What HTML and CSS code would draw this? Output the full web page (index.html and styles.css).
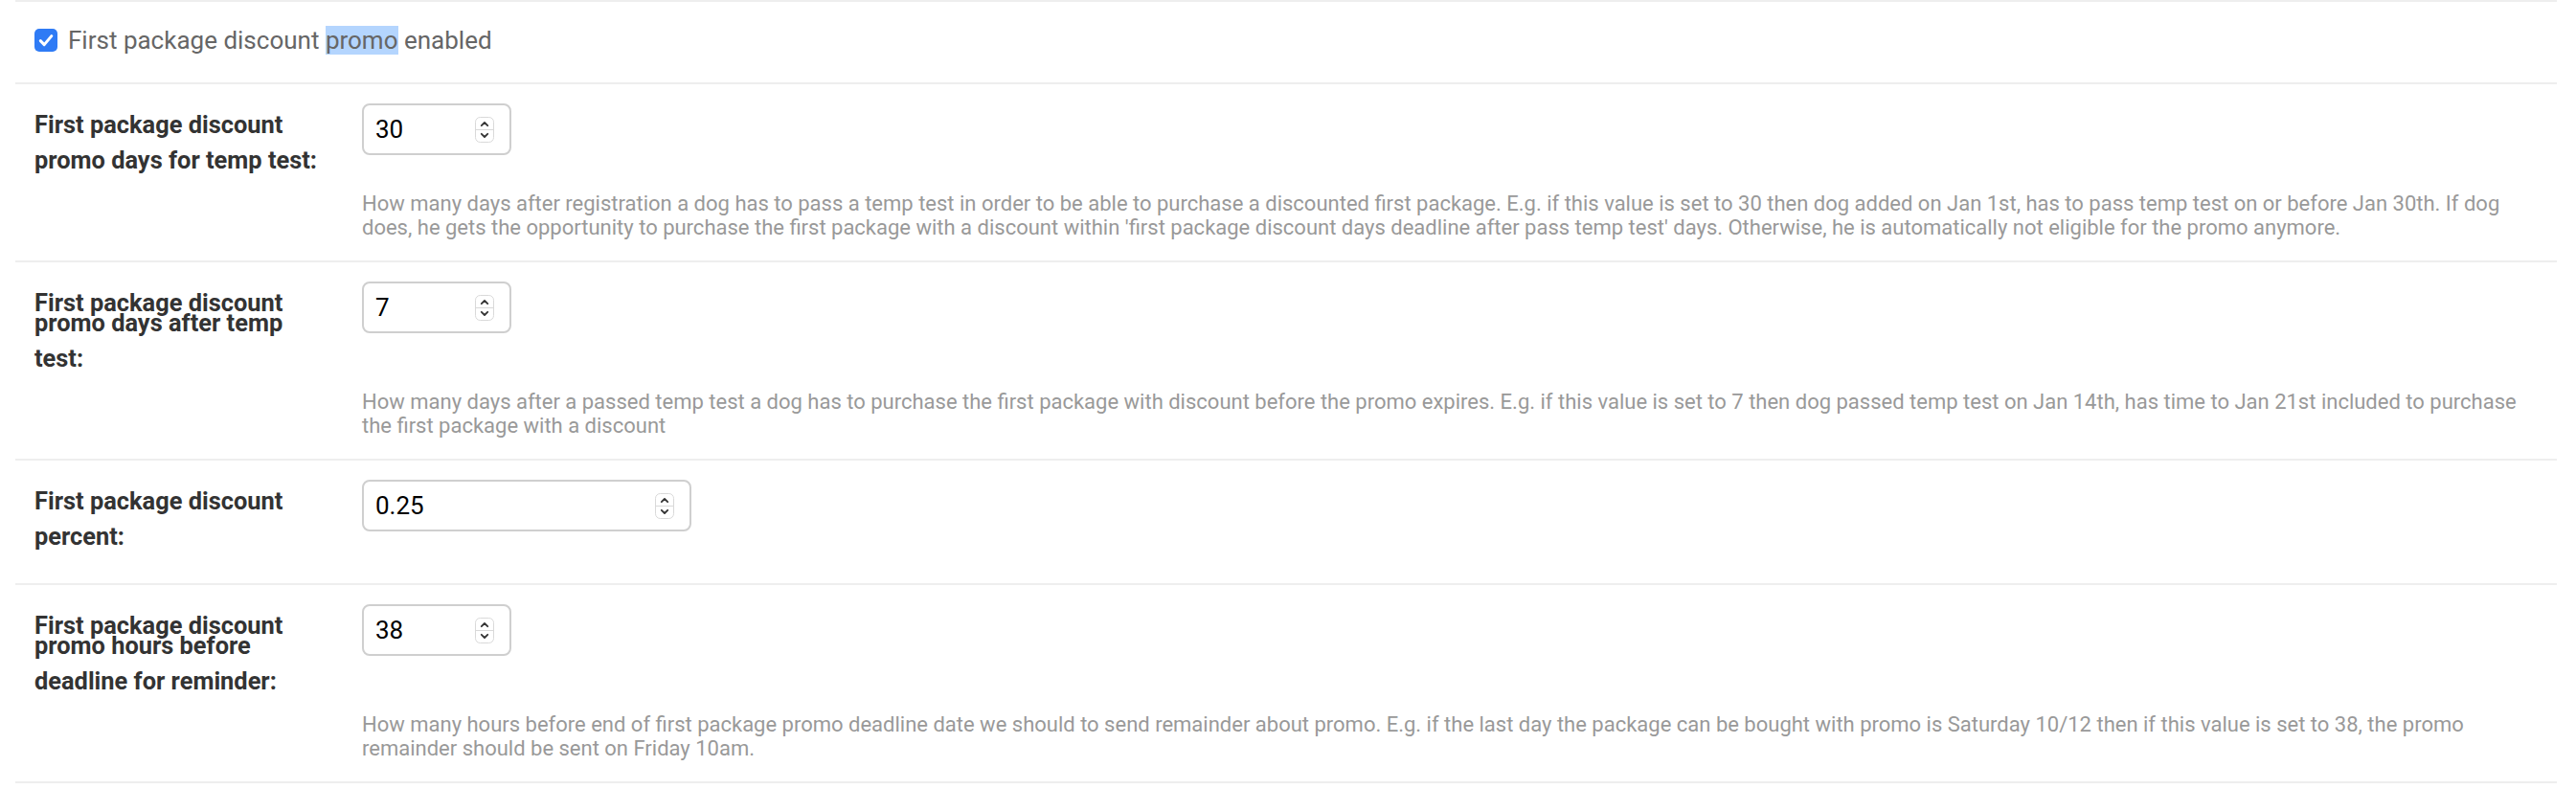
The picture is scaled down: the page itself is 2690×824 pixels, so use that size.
FILE: index.html
```html
<!DOCTYPE html>
<html lang="en">
<head>
    <meta charset="UTF-8">
    <meta name="viewport" content="width=device-width, initial-scale=1.0">
    <title>Change settings</title>
    <link rel="stylesheet" href="styles.css">
</head>
<body>
    <fieldset class="module aligned">
        <div class="form-row checkbox-row">
            <span class="checkbox">
                <svg width="24" height="24" viewBox="0 0 24 24">
                    <rect x="0" y="0" width="24" height="24" rx="5" fill="#2f7bf5"/>
                    <path d="M6.3 12.6 L10.2 16.6 L17.8 7.6" fill="none" stroke="#fff" stroke-width="3" stroke-linecap="round" stroke-linejoin="round"/>
                </svg>
            </span>
            <label class="checkbox-label">First package discount <span class="selected">promo</span> enabled</label>
        </div>

        <div class="form-row">
            <div class="field-box">
                <label class="required">First package discount promo days for temp test<span class="suffix">:</span></label>
                <div class="num-input">
                    <input type="text" value="30">
                    <span class="spin">
                        <svg width="20" height="27" viewBox="0 0 20 27">
                            <rect x="0.5" y="0.5" width="19" height="26" rx="5" fill="#fff" stroke="#d9d9d9"/>
                            <line x1="1" y1="13.5" x2="19" y2="13.5" stroke="#d9d9d9"/>
                            <path d="M6.8 9.2 L10 6 L13.2 9.2" fill="none" stroke="#333" stroke-width="1.8" stroke-linecap="round" stroke-linejoin="round"/>
                            <path d="M6.8 17.8 L10 21 L13.2 17.8" fill="none" stroke="#333" stroke-width="1.8" stroke-linecap="round" stroke-linejoin="round"/>
                        </svg>
                    </span>
                </div>
            </div>
            <div class="help">How many days after registration a dog has to pass a temp test in order to be able to purchase a discounted first package. E.g. if this value is set to 30 then dog added on Jan 1st, has to pass temp test on or before Jan 30th. If dog does, he gets the opportunity to purchase the first package with a discount within 'first package discount days deadline after pass temp test' days. Otherwise, he is automatically not eligible for the promo anymore.</div>
        </div>

        <div class="form-row">
            <div class="field-box">
                <label class="required">First package discount promo days after temp test<span class="suffix">:</span></label>
                <div class="num-input">
                    <input type="text" value="7">
                    <span class="spin">
                        <svg width="20" height="27" viewBox="0 0 20 27">
                            <rect x="0.5" y="0.5" width="19" height="26" rx="5" fill="#fff" stroke="#d9d9d9"/>
                            <line x1="1" y1="13.5" x2="19" y2="13.5" stroke="#d9d9d9"/>
                            <path d="M6.8 9.2 L10 6 L13.2 9.2" fill="none" stroke="#333" stroke-width="1.8" stroke-linecap="round" stroke-linejoin="round"/>
                            <path d="M6.8 17.8 L10 21 L13.2 17.8" fill="none" stroke="#333" stroke-width="1.8" stroke-linecap="round" stroke-linejoin="round"/>
                        </svg>
                    </span>
                </div>
            </div>
            <div class="help">How many days after a passed temp test a dog has to purchase the first package with discount before the promo expires. E.g. if this value is set to 7 then dog passed temp test on Jan 14th, has time to Jan 21st included to purchase the first package with a discount</div>
        </div>

        <div class="form-row">
            <div class="field-box">
                <label class="required">First package discount percent<span class="suffix">:</span></label>
                <div class="num-input wide">
                    <input type="text" value="0.25">
                    <span class="spin">
                        <svg width="20" height="27" viewBox="0 0 20 27">
                            <rect x="0.5" y="0.5" width="19" height="26" rx="5" fill="#fff" stroke="#d9d9d9"/>
                            <line x1="1" y1="13.5" x2="19" y2="13.5" stroke="#d9d9d9"/>
                            <path d="M6.8 9.2 L10 6 L13.2 9.2" fill="none" stroke="#333" stroke-width="1.8" stroke-linecap="round" stroke-linejoin="round"/>
                            <path d="M6.8 17.8 L10 21 L13.2 17.8" fill="none" stroke="#333" stroke-width="1.8" stroke-linecap="round" stroke-linejoin="round"/>
                        </svg>
                    </span>
                </div>
            </div>
        </div>

        <div class="form-row">
            <div class="field-box">
                <label class="required">First package discount promo hours before deadline for reminder<span class="suffix">:</span></label>
                <div class="num-input">
                    <input type="text" value="38">
                    <span class="spin">
                        <svg width="20" height="27" viewBox="0 0 20 27">
                            <rect x="0.5" y="0.5" width="19" height="26" rx="5" fill="#fff" stroke="#d9d9d9"/>
                            <line x1="1" y1="13.5" x2="19" y2="13.5" stroke="#d9d9d9"/>
                            <path d="M6.8 9.2 L10 6 L13.2 9.2" fill="none" stroke="#333" stroke-width="1.8" stroke-linecap="round" stroke-linejoin="round"/>
                            <path d="M6.8 17.8 L10 21 L13.2 17.8" fill="none" stroke="#333" stroke-width="1.8" stroke-linecap="round" stroke-linejoin="round"/>
                        </svg>
                    </span>
                </div>
            </div>
            <div class="help">How many hours before end of first package promo deadline date we should to send remainder about promo. E.g. if the last day the package can be bought with promo is Saturday 10/12 then if this value is set to 38, the promo remainder should be sent on Friday 10am.</div>
        </div>
    </fieldset>
</body>
</html>
```

FILE: styles.css
```css
:root {
    --border-color: #eeeeee;
    --label-color: #333333;
    --help-color: #999999;
    --input-border: #cfcfcf;
    --font: Roboto, "Liberation Sans", Arial, sans-serif;
}

body {
    margin: 0;
    background: #ffffff;
    font-family: var(--font);
}

.module {
    margin: 0 20px 0 16px;
    padding: 0;
    border: none;
    border-top: 2px solid var(--border-color);
    min-width: 0;
}

.form-row {
    padding: 20px 20px 22px;
    border-bottom: 2px solid var(--border-color);
}

/* checkbox row */

.checkbox-row {
    display: flex;
    align-items: center;
    gap: 11px;
    padding: 25px 20px 29px;
}

.checkbox {
    display: flex;
    width: 24px;
    height: 24px;
}

.checkbox-label {
    font-size: 26px;
    line-height: 30px;
    color: #666666;
}

.selected {
    background: #b4d5fe;
}

/* label + input line */

.field-box {
    display: flex;
    align-items: flex-start;
}

.field-box label {
    flex: none;
    width: 342px;
    box-sizing: border-box;
    padding: 12px 32px 0 0;
    font-size: 25.4px;
    font-weight: 700;
    line-height: 21px;
    color: var(--label-color);
}

.suffix {
    line-height: 53px;
}

.num-input {
    display: flex;
    align-items: center;
    width: 156px;
    height: 54px;
    box-sizing: border-box;
    border: 2px solid var(--input-border);
    border-radius: 8px;
    background: #ffffff;
}

.num-input.wide {
    width: 344px;
}

.num-input input {
    flex: 1;
    min-width: 0;
    border: none;
    outline: none;
    background: transparent;
    padding: 0 0 0 12px;
    font-family: var(--font);
    font-size: 26px;
    color: #000000;
}

.spin {
    display: flex;
    margin-right: 16px;
}

.help {
    margin: 6px 0 0 342px;
    font-size: 22px;
    line-height: 25px;
    color: var(--help-color);
}
```
